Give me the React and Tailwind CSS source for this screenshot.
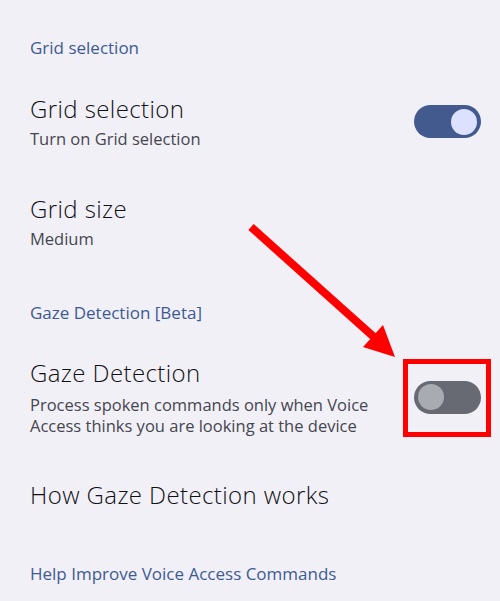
import React from 'react';

function Toggle({ on }) {
  return (
    <div
      className={
        'flex h-[33px] w-[67px] shrink-0 items-center rounded-full px-[4px] ' +
        (on ? 'justify-end bg-[#435a8e]' : 'justify-start bg-[#676a72]')
      }
    >
      <div
        className={
          'h-[26px] w-[26px] rounded-full ' + (on ? 'bg-[#dbe1ff]' : 'bg-[#a9abb3]')
        }
      />
    </div>
  );
}

function Header({ children, className }) {
  return (
    <div className={'text-[17px] leading-[24px] text-[#3e5a94] ' + className}>{children}</div>
  );
}

function Title({ children, className = '' }) {
  return (
    <div className={'text-[24px] font-light leading-[30px] tracking-[0.4px] text-[#111114] ' + className}>{children}</div>
  );
}

function App() {
  return (
    <div
      className="relative h-[601px] w-[500px] overflow-hidden bg-[#f1f0f7] pl-[30px] pr-[19px]"
      style={{ fontFamily: '"Open Sans", Roboto, sans-serif' }}
    >
      <Header className="pt-[36px]">Grid selection</Header>

      <div className="mt-[34px] flex items-center justify-between">
        <div>
          <Title>Grid selection</Title>
          <div className="text-[16.5px] leading-[30px] text-[#46464f]">Turn on Grid selection</div>
        </div>
        <div className="mt-[-5px]">
          <Toggle on />
        </div>
      </div>

      <div className="mt-[40px]">
        <Title>Grid size</Title>
        <div className="text-[16.5px] leading-[30px] text-[#46464f]">Medium</div>
      </div>

      <Header className="mt-[47px]">Gaze Detection [Beta]</Header>

      <div className="mt-[33px] flex items-center justify-between">
        <div>
          <Title>Gaze Detection</Title>
          <div className="mt-[6px] text-[16.5px] leading-[21px] text-[#46464f]">
            Process spoken commands only when Voice
            <br />
            Access thinks you are looking at the device
          </div>
        </div>
        <div className="relative">
          <Toggle on={false} />
          <div className="absolute left-[-11px] right-[-10px] top-[-22px] bottom-[-23px] border-[5px] border-[#ff0000]" />
        </div>
      </div>

      <Title className="mt-[44px]">How Gaze Detection works</Title>

      <Header className="mt-[52px]">Help Improve Voice Access Commands</Header>

      <svg className="absolute left-0 top-0" width="500" height="601" viewBox="0 0 500 601">
        <line x1="251" y1="227" x2="375" y2="338" stroke="#ff0000" strokeWidth="8" />
        <polygon points="395,357 363,347 383,325" fill="#ff0000" />
      </svg>
    </div>
  );
}

export default App;
